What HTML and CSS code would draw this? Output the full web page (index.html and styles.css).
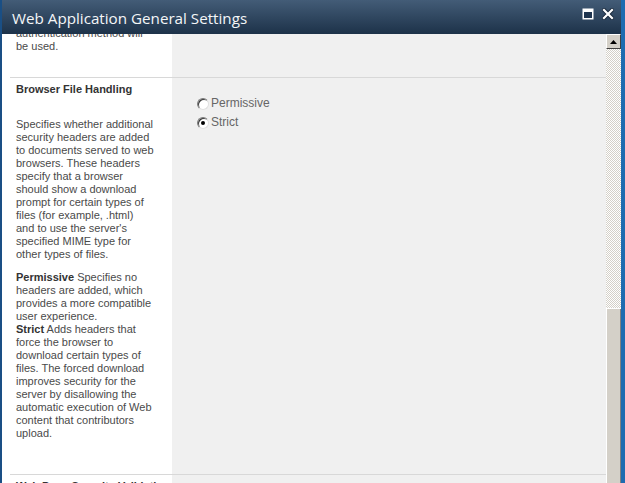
FILE: index.html
```html
<!DOCTYPE html>
<html>
<head>
<meta charset="utf-8">
<link rel="stylesheet" href="styles.css">
</head>
<body>
<div class="window">
  <div class="titlebar">
    <div class="title">Web Application General Settings</div>
    <div class="tb-buttons">
      <svg class="tb-max" width="12" height="12" viewBox="0 0 12 12"><rect x="0.5" y="0.5" width="11" height="11" fill="#fff"/><rect x="2" y="4" width="8" height="6" fill="#1f3550"/></svg>
      <svg class="tb-close" width="12" height="12" viewBox="0 0 12 12"><path d="M2 2 L10 10 M10 2 L2 10" stroke="#1a2a3c" stroke-width="4" stroke-linecap="square"/><path d="M2 2 L10 10 M10 2 L2 10" stroke="#fff" stroke-width="2.2" stroke-linecap="square"/></svg>
    </div>
  </div>
  <div class="body">
    <div class="scroll">
      <div class="prev">
        <div class="desc">authentication method will<br>be used.</div>
      </div>
      <div class="row">
        <div class="label-cell">
          <div class="heading">Browser File Handling</div>
          <div class="desc">
            <p>Specifies whether additional<br>security headers are added<br>to documents served to web<br>browsers. These headers<br>specify that a browser<br>should show a download<br>prompt for certain types of<br>files (for example, .html)<br>and to use the server's<br>specified MIME type for<br>other types of files.</p>
            <p><b>Permissive</b> Specifies no<br>headers are added, which<br>provides a more compatible<br>user experience.<br><b>Strict</b> Adds headers that<br>force the browser to<br>download certain types of<br>files. The forced download<br>improves security for the<br>server by disallowing the<br>automatic execution of Web<br>content that contributors<br>upload.</p>
          </div>
        </div>
        <div class="control-cell">
          <label class="opt"><span class="radio"></span>Permissive</label>
          <label class="opt"><span class="radio checked"></span>Strict</label>
        </div>
      </div>
      <div class="row">
        <div class="label-cell">
          <div class="heading">Web Page Security Validation</div>
        </div>
        <div class="control-cell"></div>
      </div>
    </div>
    <div class="scrollbar">
      <div class="sb-btn"><svg width="7" height="4" viewBox="0 0 7 4"><path d="M3.5 0 L7 4 L0 4 Z" fill="#000"/></svg></div>
      <div class="sb-track"></div>
      <div class="sb-thumb"></div>
    </div>
  </div>
</div>
</body>
</html>
```
FILE: styles.css
```css
html, body {
  margin: 0;
  padding: 0;
  background: #fff;
}
.window {
  width: 625px;
  height: 483px;
  box-sizing: border-box;
  display: flex;
  flex-direction: column;
  border-left: 2px solid #1a4f85;
  border-right: 4px solid #1e6bb0;
  overflow: hidden;
}
.titlebar {
  height: 34px;
  flex: none;
  display: flex;
  align-items: center;
  justify-content: space-between;
  background: linear-gradient(#435c77, #1d3249);
  padding: 0 7px 0 10px;
}
.title {
  font-family: "Open Sans", "DejaVu Sans", sans-serif;
  font-size: 15.2px;
  color: #f4f6f8;
  padding-top: 2px;
}
.tb-buttons {
  display: flex;
  gap: 8px;
  align-items: center;
  margin-top: -6px;
}
.body {
  flex: 1;
  display: flex;
  min-height: 0;
}
.scroll {
  flex: 1;
  overflow: hidden;
  background: linear-gradient(to right, #fff 170px, #f0f0f0 170px);
  font-family: "Liberation Sans", Arial, sans-serif;
  font-size: 11px;
  line-height: 13px;
  color: #4a4a4a;
}
.prev {
  margin-top: -7px;
  padding: 0 0 24px 14px;
  width: 156px;
  box-sizing: border-box;
}
.row {
  margin-left: 8px;
  border-top: 1px solid #d8d8d8;
  display: flex;
}
.label-cell {
  width: 162px;
  flex: none;
  box-sizing: border-box;
  padding: 5px 6px 34px 6px;
}
.heading {
  font-weight: bold;
  color: #333;
  white-space: nowrap;
}
.desc p {
  margin: 0;
}
.desc p:first-child {
  margin-top: 22px;
}
.desc p + p {
  margin-top: 10px;
}
.desc b {
  color: #333;
}
.control-cell {
  flex: 1;
  padding: 19px 0 0 25px;
  display: flex;
  flex-direction: column;
  gap: 6px;
}
.opt {
  display: flex;
  align-items: center;
  gap: 2px;
  font-size: 12px;
  color: #666;
  height: 13px;
}
.radio {
  width: 12px;
  height: 12px;
  box-sizing: border-box;
  border-radius: 50%;
  border: 1px solid;
  border-color: #7a7a7a #e0e0e0 #e0e0e0 #7a7a7a;
  box-shadow: inset 1px 1px 0 #3a3a3a;
  background: #fff;
  display: flex;
  align-items: center;
  justify-content: center;
}
.radio.checked::after {
  content: "";
  width: 4px;
  height: 4px;
  border-radius: 50%;
  background: #000;
}
.scrollbar {
  width: 15px;
  flex: none;
  display: flex;
  flex-direction: column;
}
.sb-btn {
  height: 15px;
  flex: none;
  box-sizing: border-box;
  background: #d4d0c8;
  border: 1px solid;
  border-color: #fff #404040 #404040 #fff;
  display: flex;
  align-items: center;
  justify-content: center;
}
.sb-track {
  height: 259px;
  flex: none;
  background: repeating-conic-gradient(#d4d0c8 0 25%, #fff 0 50%) 0 0 / 2px 2px;
}
.sb-thumb {
  flex: 1;
  background: #d4d0c8;
  border-left: 1px solid #fff;
  border-top: 1px solid #fff;
  box-shadow: inset -1px 0 #808080;
}
```
